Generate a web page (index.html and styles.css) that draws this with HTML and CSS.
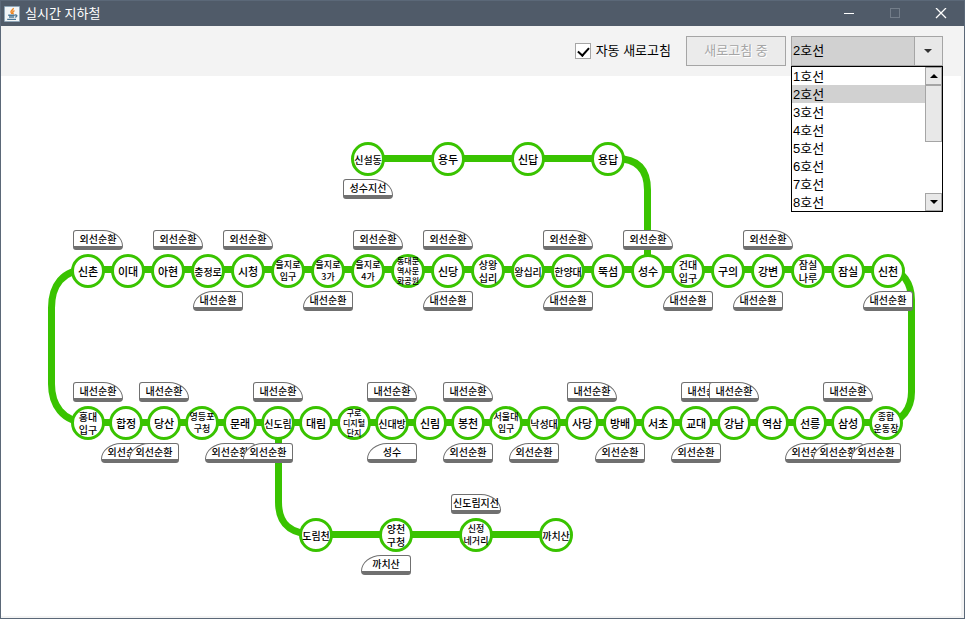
FILE: index.html
```html
<!DOCTYPE html>
<html lang="ko">
<head>
<meta charset="utf-8">
<meta name="viewport" content="width=device-width, initial-scale=1">
<title>실시간 지하철</title>
<link rel="stylesheet" href="styles.css">
</head>
<body>
<div class="window">
  <header class="titlebar">
    <svg class="app-icon" width="16" height="16" viewBox="0 0 16 16" aria-hidden="true">
      <rect width="16" height="16" rx="1" fill="#8fa6b8"/>
      <rect x="1" y="1" width="14" height="14" fill="#f2f5f7"/>
      <path d="M9.300 2c.5 1.700-3 2.600-2.300 4.200.2.600.8 1 .8 1.800M10.500 4.600c-1.600.7-2.200 1.400-1.500 2.400.3.500.2.900-.2 1.300" fill="none" stroke="#ee8420" stroke-width="1.400"/>
      <path d="M4.200 9.200h6.600M5 11h5.200M3.200 13.400h8.800M11 9c2.400-.4 2.400 1.700.2 2.300" fill="none" stroke="#4d7896" stroke-width="1.400"/>
    </svg>
    <h1 class="title">실시간 지하철</h1>
    <div class="window-buttons">
      <button class="window-button" type="button" aria-label="최소화">
        <svg width="12" height="12" viewBox="0 0 12 12"><path d="M1 5.500h10" stroke="#fff"/></svg>
      </button>
      <button class="window-button" type="button" aria-label="최대화" disabled>
        <svg width="12" height="12" viewBox="0 0 12 12"><rect x="1.500" y="0.500" width="9" height="9" fill="none" stroke="#737d89"/></svg>
      </button>
      <button class="window-button" type="button" aria-label="닫기">
        <svg width="12" height="12" viewBox="0 0 12 12"><path d="M1 0l10 10M11 0L1 10" stroke="#fff" stroke-width="1.300"/></svg>
      </button>
    </div>
  </header>

  <div class="toolbar">
    <label class="auto" for="auto-refresh">
      <input class="check" type="checkbox" id="auto-refresh" checked>
      자동 새로고침
    </label>
    <button class="refresh" type="button" disabled>새로고침 중</button>
    <div class="combo">
      <select class="combo-select" aria-label="호선 선택">
        <option>1호선</option>
        <option selected>2호선</option>
        <option>3호선</option>
        <option>4호선</option>
        <option>5호선</option>
        <option>6호선</option>
        <option>7호선</option>
        <option>8호선</option>
      </select>
      <svg class="combo-arrow" width="8" height="4" viewBox="0 0 8 4" aria-hidden="true"><path d="M0 0h8L4 4z" fill="#333"/></svg>
      <div class="popup">
        <ul class="options" role="listbox" aria-label="호선">
          <li class="option" role="option">1호선</li>
          <li class="option selected" role="option" aria-selected="true">2호선</li>
          <li class="option" role="option">3호선</li>
          <li class="option" role="option">4호선</li>
          <li class="option" role="option">5호선</li>
          <li class="option" role="option">6호선</li>
          <li class="option" role="option">7호선</li>
          <li class="option" role="option">8호선</li>
        </ul>
        <div class="scrollbar">
          <button class="scroll-button" type="button" aria-label="위로">
            <svg width="8" height="4" viewBox="0 0 8 4"><path d="M0 4h8L4 0z"/></svg>
          </button>
          <div class="thumb"></div>
          <button class="scroll-button" type="button" aria-label="아래로">
            <svg width="8" height="4" viewBox="0 0 8 4"><path d="M0 0h8L4 4z"/></svg>
          </button>
        </div>
      </div>
    </div>
  </div>

  <main class="map" id="map">
    <svg class="track" width="960" height="540" viewBox="1 76 960 540" aria-hidden="true">
      <path d="M88 269.500H888C903 269.500 911.500 284 911.500 300V392C911.500 408 902 422.500 886 422.500H88C62 422.500 51.500 404 51.500 384V308C51.500 286 62 269.500 88 269.500"/>
      <path d="M368 158.500H616C636 158.500 647.500 168 647.500 190V270"/>
      <path d="M278.500 423V502C278.500 524 290 534.500 316 534.500H556"/>
    </svg>
  </main>
</div>
<script src="map.js"></script>
</body>
</html>
```

FILE: styles.css
```css
* {
  box-sizing: border-box;
}

body {
  margin: 0;
  background: #fff;
  color: #000;
  font-family: "Liberation Sans", "Noto Sans CJK KR", sans-serif;
  font-size: 13px;
  line-height: 18px;
}

button,
select,
input {
  margin: 0;
  padding: 0;
  border-radius: 0;
  font: inherit;
}

.window {
  display: flex;
  flex-direction: column;
  min-height: 100vh;
  border: 1px solid #5b6878;
  background: #f3f3f3;
}

.titlebar {
  display: flex;
  align-items: center;
  height: 25px;
  padding-left: 3px;
  background: #505b69;
  color: #fff;
}

.title {
  margin: 0 0 0 5px;
  font-size: 13px;
  font-weight: 400;
}

.window-buttons {
  display: flex;
  margin-left: auto;
}

.window-button {
  display: flex;
  align-items: center;
  justify-content: center;
  width: 46px;
  height: 25px;
  border: 0;
  background: none;
}

.toolbar {
  display: flex;
  align-items: center;
  justify-content: flex-end;
  height: 50px;
  padding-right: 21px;
}

.auto {
  display: flex;
  align-items: center;
  gap: 5px;
  margin-right: 15px;
}

.check {
  appearance: none;
  width: 16px;
  height: 16px;
  border: 1px solid #a5a5a5;
  background: #fff;
}

.check:checked::before {
  content: "";
  display: block;
  width: 5px;
  height: 9px;
  margin: 1px 0 0 4px;
  border: solid #000;
  border-width: 0 2px 2px 0;
  transform: rotate(42deg);
}

.refresh {
  width: 100px;
  height: 30px;
  margin-right: 5px;
  border: 1px solid #a5a5a5;
  background: #ebebeb;
  color: #a5a5a5;
  text-shadow: 1px 1px #fff;
}

.combo {
  position: relative;
  width: 152px;
  height: 30px;
}

.combo-select {
  appearance: none;
  width: 100%;
  height: 100%;
  padding-left: 1px;
  border: 1px solid #a5a5a5;
  background: linear-gradient(to left, #e8e8e8 27px, #a5a5a5 27px, #a5a5a5 28px, #d1d1d1 28px);
  color: #000;
}

.combo-arrow {
  position: absolute;
  top: 13px;
  right: 11px;
  pointer-events: none;
}

.popup {
  position: absolute;
  z-index: 2;
  top: 100%;
  left: 0;
  display: flex;
  width: 100%;
  border: 1px solid #000;
  background: #fff;
}

.options {
  flex: 1;
  margin: 0;
  padding: 0;
  list-style: none;
}

.option {
  height: 18px;
  padding-left: 1px;
  line-height: 20px;
}

.option.selected {
  background: #d1d1d1;
}

.scrollbar {
  display: flex;
  flex-direction: column;
  width: 17px;
}

.scroll-button,
.thumb {
  border: 1px solid #a5a5a5;
  background: #e8e8e8;
}

.scroll-button {
  display: flex;
  align-items: center;
  justify-content: center;
  height: 18px;
}

.thumb {
  height: 57px;
  margin-bottom: auto;
}

.map {
  position: relative;
  flex: 1;
  min-height: 540px;
  margin: 0 3px 2px 0;
  background: #fff;
  font-family: "Noto Sans CJK KR", sans-serif;
}

.track {
  display: block;
  fill: none;
  stroke: #39c300;
  stroke-width: 7px;
}

/* Stations and trains are placed on the map by their coordinates. */
.station {
  position: absolute;
  display: flex;
  align-items: center;
  justify-content: center;
  width: 34px;
  height: 34px;
  border: 3px solid #39c300;
  border-radius: 50%;
  background: #fff;
  font-size: 11px;
  font-weight: 500;
  line-height: 13px;
  text-align: center;
  white-space: pre;
}

.station.long,
.station.two-line {
  font-size: 10px;
}

.station.small {
  font-size: 9px;
  line-height: 12px;
}

.station.tiny {
  font-size: 8px;
  line-height: 10px;
}

.train {
  position: absolute;
  width: 50px;
  height: 20px;
  border: 1px solid #707070;
  border-bottom-width: 4px;
  background: #fff;
  font-size: 10px;
  font-weight: 500;
  line-height: 16px;
  text-align: center;
  white-space: nowrap;
}

.train.right {
  border-radius: 3px 20px 4px 3px / 3px 16px 4px 3px;
}

.train.left {
  border-radius: 20px 3px 3px 4px / 16px 3px 3px 4px;
}

.train-name {
  display: flex;
  justify-content: center;
}
```

FILE: map.js
```js
// Window coordinates of the map's top left corner.
const ORIGIN = { x: 1, y: 76 };

// Each row: first centre, spacing, centre height, names ("/" breaks a line).
const rows = [
  [368, 80, 159, "신설동 용두 신답 용답"],
  [88, 40, 271, "신촌 이대 아현 충정로 시청 을지로/입구 을지로/3가 을지로/4가 동대문/역사문/화공원 신당 상왕/십리 왕십리 한양대 뚝섬 성수 건대/입구 구의 강변 잠실/나루 잠실 신천"],
  [88, 38, 423, "홍대/입구 합정 당산 영등포/구청 문래 신도림 대림 구로/디지털/단지 신대방 신림 봉천 서울대/입구 낙성대 사당 방배 서초 교대 강남 역삼 선릉 삼성 종합/운동장"],
  [316, 80, 535, "도림천 양천/구청 신정/네거리 까치산"]
];

// Each group: destination, tag shape, top, left edges.
const trains = [
  ["성수지선", "right", 179, [343]],
  ["외선순환", "right", 230, [73, 153, 223, 353, 423, 543, 623, 743]],
  ["내선순환", "left", 291, [193, 303, 423, 543, 663, 733, 863]],
  ["내선순환", "right", 382, [73, 139, 253, 367, 443, 567, 681, 709, 823]],
  ["외선순환", "left", 443, [101, 129, 205, 243, 443, 509, 595, 671, 785, 813, 851]],
  ["성수", "left", 443, [367]],
  ["신도림지선", "right", 494, [451]],
  ["까치산", "left", 555, [361]]
];

const map = document.getElementById("map");

function place(className, x, y) {
  const node = document.createElement("div");
  node.className = className;
  node.style.left = `${x - ORIGIN.x}px`;
  node.style.top = `${y - ORIGIN.y}px`;
  map.append(node);
  return node;
}

function sizeClass(lines) {
  const longest = Math.max(...lines.map((line) => line.length));
  if (lines.length === 3) return "tiny";
  if (lines.length === 2) return longest > 2 ? "small" : "two-line";
  return longest > 2 ? "long" : "";
}

for (const [start, step, y, names] of rows) {
  names.split(" ").forEach((name, i) => {
    const lines = name.split("/");
    const node = place(`station ${sizeClass(lines)}`, start + step * i - 17, y - 17);
    node.textContent = lines.join("\n");
  });
}

for (const [name, side, y, lefts] of trains) {
  for (const x of lefts) {
    const label = document.createElement("span");
    label.className = "train-name";
    label.textContent = name;
    place(`train ${side}`, x, y).append(label);
  }
}
```
